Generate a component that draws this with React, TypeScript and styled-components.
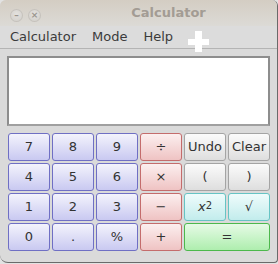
import styled, { createGlobalStyle } from "styled-components";

const GlobalStyle = createGlobalStyle`
  html, body {
    margin: 0;
    padding: 0;
    background: #e2e2e2;
  }
  * { box-sizing: border-box; }
`;

type Tone = "blue" | "red" | "gray" | "cyan" | "green";

const tones: Record<Tone, { border: string; top: string; bottom: string }> = {
  blue: { border: "#6f6fc4", top: "#f3f3fc", bottom: "#c9c9f1" },
  red: { border: "#c46c6c", top: "#fcefef", bottom: "#efc3c3" },
  gray: { border: "#a4a4a4", top: "#fbfbfb", bottom: "#dedede" },
  cyan: { border: "#66c4c4", top: "#effcfc", bottom: "#c2ecec" },
  green: { border: "#4cb84c", top: "#e6fae6", bottom: "#aeeeae" },
};

const Window = styled.div`
  position: relative;
  width: 278px;
  height: 263px;
  background: #dadada;
  border-right: 1px solid #6a6a6a;
  border-bottom: 1px solid #6a6a6a;
  border-radius: 6px 6px 4px 8px;
  overflow: hidden;
  font-family: "DejaVu Sans", "Liberation Sans", sans-serif;
  display: flex;
  flex-direction: column;
`;

const TitleBar = styled.div`
  height: 26px;
  display: flex;
  align-items: center;
  padding-left: 10px;
  background: linear-gradient(#d4cdc3, #dcdad6);
`;

const TitleButton = styled.span`
  width: 13px;
  height: 13px;
  margin: 5px 5px 0 0;
  border-radius: 50%;
  background: radial-gradient(circle at 50% 40%, #e4e2df, #cdcac5);
  box-shadow: inset 0 0 0 1px #c6c2bc;
  color: #9a958e;
  font-size: 9px;
  font-weight: bold;
  line-height: 13px;
  text-align: center;
`;

const Title = styled.div`
  flex: 1;
  text-align: center;
  padding-left: 14px;
  font-size: 13px;
  font-weight: bold;
  color: #a39c94;
  margin-top: -2px;
`;

const MenuBar = styled.div`
  height: 23px;
  display: flex;
  align-items: center;
  gap: 16px;
  padding: 0 0 2px 10px;
  border-bottom: 1px solid #b4b4b4;
  background: #dcdcdc;
  font-size: 13px;
  color: #3b3b3b;
`;

const Body = styled.div`
  padding: 7px 7px 0 7px;
  display: flex;
  flex-direction: column;
  gap: 7px;
`;

const Display = styled.div`
  height: 70px;
  background: #fff;
  border: 2px solid #8d8d8d;
  border-bottom-color: #a0a0a0;
`;

const Keypad = styled.div`
  padding-left: 1px;
  display: grid;
  grid-template-columns: repeat(6, 42px);
  grid-auto-rows: 28px;
  gap: 2px;
`;

const Key = styled.div<{ $tone: Tone; $span?: number }>`
  grid-column: span ${(p) => p.$span ?? 1};
  display: flex;
  align-items: center;
  justify-content: center;
  border: 1px solid ${(p) => tones[p.$tone].border};
  border-radius: 3px;
  background: linear-gradient(${(p) => tones[p.$tone].top}, ${(p) => tones[p.$tone].bottom});
  font-size: 13px;
  color: #333;
  padding-bottom: 2px;
  sup {
    font-size: 10px;
    position: relative;
    top: -1px;
  }
`;

const Cursor = styled.div`
  position: absolute;
  left: 188px;
  top: 31px;
  width: 21px;
  height: 21px;
  &::before, &::after {
    content: "";
    position: absolute;
    background: #fff;
  }
  &::before { left: 7px; top: 0; width: 7px; height: 21px; }
  &::after { left: 0; top: 8px; width: 21px; height: 6px; }
`;

const keys: { label: React.ReactNode; tone: Tone; span?: number }[] = [
  { label: "7", tone: "blue" },
  { label: "8", tone: "blue" },
  { label: "9", tone: "blue" },
  { label: "÷", tone: "red" },
  { label: "Undo", tone: "gray" },
  { label: "Clear", tone: "gray" },
  { label: "4", tone: "blue" },
  { label: "5", tone: "blue" },
  { label: "6", tone: "blue" },
  { label: "×", tone: "red" },
  { label: "(", tone: "gray" },
  { label: ")", tone: "gray" },
  { label: "1", tone: "blue" },
  { label: "2", tone: "blue" },
  { label: "3", tone: "blue" },
  { label: "−", tone: "red" },
  { label: <><i>x</i><sup>2</sup></>, tone: "cyan" },
  { label: "√", tone: "cyan" },
  { label: "0", tone: "blue" },
  { label: ".", tone: "blue" },
  { label: "%", tone: "blue" },
  { label: "+", tone: "red" },
  { label: "=", tone: "green", span: 2 },
];

export default function App() {
  return (
    <>
      <GlobalStyle />
      <Window>
        <TitleBar>
          <TitleButton>–</TitleButton>
          <TitleButton>×</TitleButton>
          <Title>Calculator</Title>
        </TitleBar>
        <MenuBar>
          <span>Calculator</span>
          <span>Mode</span>
          <span>Help</span>
        </MenuBar>
        <Body>
          <Display />
          <Keypad>
            {keys.map((k, i) => (
              <Key key={i} $tone={k.tone} $span={k.span}>
                {k.label}
              </Key>
            ))}
          </Keypad>
        </Body>
        <Cursor />
      </Window>
    </>
  );
}
